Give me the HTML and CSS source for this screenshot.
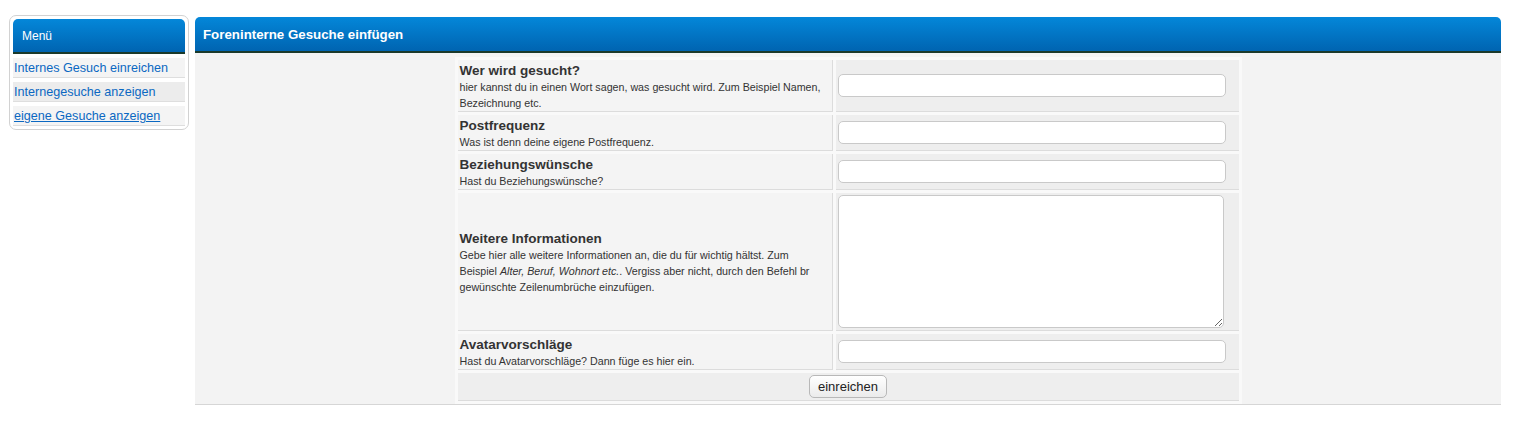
FILE: index.html
```html
<!DOCTYPE html>
<html lang="de">
<head>
<meta charset="utf-8">
<title>Foreninterne Gesuche einfügen</title>
<link rel="stylesheet" href="styles.css">
</head>
<body>
<div class="page">
  <aside class="menu">
    <div class="menu-head">Menü</div>
    <div class="menu-item odd"><a href="#">Internes Gesuch einreichen</a></div>
    <div class="menu-item even"><a href="#">Internegesuche anzeigen</a></div>
    <div class="menu-item odd"><a href="#" class="underlined">eigene Gesuche anzeigen</a></div>
  </aside>
  <main class="main">
    <div class="main-head">Foreninterne Gesuche einfügen</div>
    <div class="main-body">
      <table class="form">
        <tr>
          <td class="label">
            <div class="title">Wer wird gesucht?</div>
            <div class="desc">hier kannst du in einen Wort sagen, was gesucht wird. Zum Beispiel Namen, Bezeichnung etc.</div>
          </td>
          <td class="field"><input class="text" type="text"></td>
        </tr>
        <tr>
          <td class="label">
            <div class="title">Postfrequenz</div>
            <div class="desc">Was ist denn deine eigene Postfrequenz.</div>
          </td>
          <td class="field"><input class="text" type="text"></td>
        </tr>
        <tr>
          <td class="label">
            <div class="title">Beziehungswünsche</div>
            <div class="desc">Hast du Beziehungswünsche?</div>
          </td>
          <td class="field"><input class="text" type="text"></td>
        </tr>
        <tr>
          <td class="label">
            <div class="title">Weitere Informationen</div>
            <div class="desc">Gebe hier alle weitere Informationen an, die du für wichtig hältst. Zum Beispiel <i>Alter, Beruf, Wohnort etc.</i>. Vergiss aber nicht, durch den Befehl br gewünschte Zeilenumbrüche einzufügen.</div>
          </td>
          <td class="field"><textarea class="area"></textarea></td>
        </tr>
        <tr>
          <td class="label">
            <div class="title">Avatarvorschläge</div>
            <div class="desc">Hast du Avatarvorschläge? Dann füge es hier ein.</div>
          </td>
          <td class="field"><input class="text" type="text"></td>
        </tr>
        <tr>
          <td class="submit" colspan="2"><button class="btn" type="button">einreichen</button></td>
        </tr>
      </table>
    </div>
  </main>
</div>
</body>
</html>
```
FILE: styles.css
```css
html, body {
  margin: 0;
  padding: 0;
  background: #ffffff;
}
body {
  font-family: "Liberation Sans", Arial, sans-serif;
  color: #333333;
}
.page {
  display: flex;
  align-items: flex-start;
  gap: 6px;
  padding: 15px 26px 0 9px;
}
.menu {
  width: 180px;
  box-sizing: border-box;
  flex: none;
  border: 1px solid #d2d2d2;
  border-radius: 7px;
  padding: 3px;
  background: #ffffff;
}
.menu-head {
  height: 32px;
  padding-top: 1px;
  line-height: 33px;
  border-bottom: 2px solid #1b3a2b;
  border-radius: 5px 5px 0 0;
  background: linear-gradient(#0487d9, #0064b1);
  color: #ffffff;
  font-size: 12px;
  padding-left: 9px;
}
.menu-item {
  margin-top: 4px;
  height: 18px;
  padding-top: 1px;
  line-height: 19px;
  border-bottom: 1px solid #dedede;
  padding-left: 1px;
  font-size: 12.6px;
}
.menu-item.odd { background: #f4f4f4; }
.menu-item.even { background: #ececec; }
.menu-item a {
  color: #0b68c2;
  text-decoration: none;
}
.menu-item a.underlined { text-decoration: underline; }

.main {
  flex: 1;
  margin-top: 2px;
}
.main-head {
  height: 34px;
  line-height: 35px;
  border-bottom: 2px solid #1b3a2b;
  border-radius: 5px 5px 0 0;
  background: linear-gradient(#0487d9, #0064b1);
  color: #ffffff;
  font-size: 13.3px;
  font-weight: bold;
  padding-left: 8px;
}
.main-body {
  background: #f3f3f3;
  padding: 4px 0 0;
  border-bottom: 1px solid #d6d6d6;
}
.form {
  width: 787px;
  margin: 0 auto;
  border-spacing: 3px;
  background: #f9f9f9;
  table-layout: fixed;
}
.label {
  width: 375px;
  box-sizing: border-box;
  padding: 3px 8px 0 2px;
  background: #f4f4f4;
  border-right: 1px solid #dcdcdc;
  border-bottom: 1px solid #dcdcdc;
  vertical-align: middle;
}
.title {
  font-size: 13.5px;
  font-weight: bold;
  line-height: 16px;
  color: #333333;
}
.desc {
  font-size: 10.7px;
  line-height: 16px;
  color: #333333;
}
.field {
  padding: 2px 2px;
  background: #eeeeee;
  border-bottom: 1px solid #dcdcdc;
  vertical-align: middle;
}
.text {
  display: block;
  box-sizing: border-box;
  width: 388px;
  height: 23px;
  margin: 0;
  border: 1px solid #c9c9c9;
  border-radius: 5px;
  background: #ffffff;
}
.area {
  display: block;
  box-sizing: border-box;
  width: 386px;
  height: 133px;
  margin: 0;
  border: 1px solid #c9c9c9;
  border-radius: 5px;
  background: #ffffff;
}
.submit {
  text-align: center;
  padding: 2px 0;
  background: #eeeeee;
  border-bottom: 1px solid #dcdcdc;
}
.btn {
  font-family: "Liberation Sans", Arial, sans-serif;
  font-size: 13px;
  color: #222222;
  height: 23px;
  padding: 0 8px;
  border: 1px solid #b8b8b8;
  border-radius: 5px;
  background: linear-gradient(#ffffff, #ebebeb);
}
```
